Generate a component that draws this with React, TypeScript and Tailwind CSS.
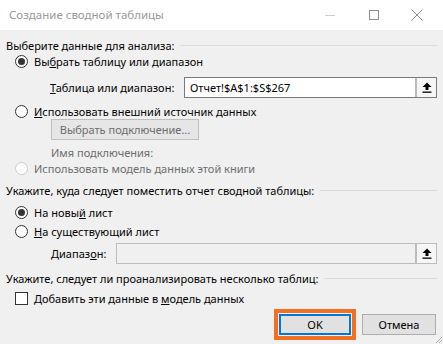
import React from "react";

function Radio({ checked, disabled }: { checked?: boolean; disabled?: boolean }) {
  return (
    <span
      className={`flex h-[13px] w-[13px] shrink-0 items-center justify-center rounded-full border bg-white ${
        disabled ? "border-[#cccccc]" : "border-[#333333]"
      }`}
    >
      {checked && <span className="h-[7px] w-[7px] rounded-full bg-[#333333]" />}
    </span>
  );
}

function UploadIcon() {
  return (
    <svg width="10" height="11" viewBox="0 0 10 11">
      <path d="M5 0.5 L9.5 5 L6.5 5 L6.5 8 L3.5 8 L3.5 5 L0.5 5 Z" fill="#000" />
      <rect x="0.5" y="9.5" width="9" height="1.3" fill="#000" />
    </svg>
  );
}

function Section({ title }: { title: string }) {
  return (
    <div className="flex h-[16px] items-center">
      <span className="whitespace-nowrap text-black">{title}</span>
      <span className="ml-[6px] h-px flex-1 bg-[#dcdcdc]" />
    </div>
  );
}

function RangeInput({ value, disabled }: { value?: string; disabled?: boolean }) {
  return (
    <div
      className={`flex h-[21px] flex-1 items-stretch border ${
        disabled ? "border-[#bcbcbc] bg-[#f0f0f0]" : "border-[#7a7a7a] bg-white"
      }`}
    >
      <div className={`flex flex-1 items-center pl-[5px] ${disabled ? "m-px bg-[#f0f0f0]" : ""}`}>
        {value}
      </div>
      <div className="flex w-[21px] items-center justify-center border-l-2 border-[#bcbcbc] bg-[#f6f6f6]">
        <UploadIcon />
      </div>
    </div>
  );
}

export default function App() {
  return (
    <div
      className="relative h-[344px] w-[443px] overflow-hidden bg-[#f0f0f0] text-[11px] leading-none"
      style={{ fontFamily: '"Noto Sans", "Open Sans", sans-serif' }}
    >
      {/* title bar */}
      <div className="flex h-[30px] items-center bg-white pl-[9px]">
        <span className="flex-1 text-[11.5px] text-[#999999]">Создание сводной таблицы</span>
        <div className="flex h-full items-center">
          <span className="mr-[34px] h-px w-[10px] bg-[#cccccc]" />
          <span className="mr-[32px] h-[10px] w-[10px] border border-[#8f8f8f]" />
          <svg width="12" height="12" viewBox="0 0 12 12" className="mr-[20px]">
            <path d="M0.5 0.5 L11.5 11.5 M11.5 0.5 L0.5 11.5" stroke="#8f8f8f" strokeWidth="1" />
          </svg>
        </div>
      </div>

      <div className="flex flex-col px-[6px] pt-[7px]">
        <Section title="Выберите данные для анализа:" />

        <div className="flex h-[16px] items-center gap-[6px] pl-[9px]">
          <Radio checked />
          <span>
            Вы<u>б</u>рать таблицу или диапазон
          </span>
        </div>

        <div className="mt-[8px] flex items-center">
          <span className="w-[178px] shrink-0 pl-[44px] whitespace-nowrap">
            <u>Т</u>аблица или диапазон:
          </span>
          <RangeInput value="Отчет!$A$1:$S$267" />
        </div>

        <div className="mt-[5px] flex h-[16px] items-center gap-[6px] pl-[9px]">
          <Radio />
          <span>
            <u>И</u>спользовать внешний источник данных
          </span>
        </div>

        <div className="flex pl-[45px]">
          <div className="flex h-[21px] w-[148px] items-center justify-center border border-[#bfbfbf] bg-[#e6e6e6] text-[#6d6d6d]">
            Выбрать подключение...
          </div>
        </div>

        <div className="mt-[4px] flex h-[16px] items-center pl-[45px] text-[#6d6d6d]">
          Имя подключения:
        </div>

        <div className="flex h-[16px] items-center gap-[6px] pl-[9px] text-[#6d6d6d]">
          <Radio disabled />
          <span>Использовать модель данных этой книги</span>
        </div>

        <div className="mt-[6px]">
          <Section title="Укажите, куда следует поместить отчет сводной таблицы:" />
        </div>

        <div className="mt-[6px] flex h-[16px] items-center gap-[6px] pl-[9px]">
          <Radio checked />
          <span>
            На новы<u>й</u> лист
          </span>
        </div>

        <div className="mt-[3px] flex h-[16px] items-center gap-[6px] pl-[9px]">
          <Radio />
          <span>
            <u>Н</u>а существующий лист
          </span>
        </div>

        <div className="mt-[4px] flex items-center">
          <span className="w-[110px] shrink-0 pl-[45px] whitespace-nowrap">
            Диапаз<u>о</u>н:
          </span>
          <RangeInput disabled />
        </div>

        <div className="mt-[6px]">
          <Section title="Укажите, следует ли проанализировать несколько таблиц:" />
        </div>

        <div className="mt-[4px] flex h-[16px] items-center gap-[6px] pl-[9px]">
          <span className="h-[13px] w-[13px] border border-[#333333] bg-white" />
          <span>
            Добавить эти данные в <u>м</u>одель данных
          </span>
        </div>

        <div className="mt-[3px] flex justify-end gap-[6px] pr-px">
          <div className="border-[4px] border-[#f37021] p-px">
            <div className="flex h-[21px] w-[72px] items-center justify-center border-2 border-[#0078d7] bg-[#e1e1e1]">
              OK
            </div>
          </div>
          <div className="mt-[5px] flex h-[21px] w-[74px] items-center justify-center border border-[#adadad] bg-[#e1e1e1]">
            Отмена
          </div>
        </div>
      </div>

      {/* resize grip */}
      <svg width="8" height="8" viewBox="0 0 8 8" className="absolute right-0 bottom-0">
        <path d="M7 1 L1 7 M7 4 L4 7" stroke="#b0b0b0" strokeWidth="1" />
      </svg>
    </div>
  );
}
